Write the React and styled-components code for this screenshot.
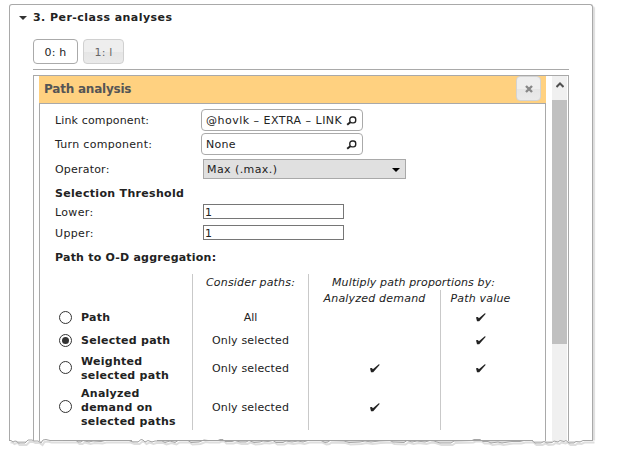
import React from 'react';
import styled, { createGlobalStyle } from 'styled-components';

const Global = createGlobalStyle`
  *, *::before, *::after { box-sizing: border-box; }
  body { margin: 0; background: #fff; }
`;

const Page = styled.div`
  width: 633px;
  height: 461px;
  padding: 4px 0 0 9px;
  overflow: hidden;
  color: #222;
  font: 11px/14px Verdana, 'DejaVu Sans', sans-serif;
  white-space: nowrap;
`;

const Panel = styled.section`
  position: relative;
  width: 584px;
  height: 437px;
  padding: 0 23px;
  border: 1px solid #a9a9a9;
  border-bottom: 0;
  border-radius: 3px 3px 0 0;
  box-shadow: 2px 2px 1px #ddd;
  background: #fff;
`;

const Heading = styled.h2`
  display: flex;
  align-items: center;
  height: 24px;
  margin: 0 0 0 -14px;
  padding-top: 1px;
  font-size: 11px;
  font-weight: bold;
`;

const Fit = styled.span`
  display: inline-block;
  letter-spacing: ${p => p.$ls || 0}px;
`;

const Caret = styled.span`
  width: 0;
  margin-right: 6px;
  border: 4px solid transparent;
  border-top: 4px solid #333;
  border-bottom: 0;
`;

const Tabs = styled.nav`
  display: flex;
  gap: 5px;
  height: 41px;
  padding-top: 10px;
  border-bottom: 1px solid #a9a9a9;
`;

const Tab = styled.button`
  width: ${p => p.$w}px;
  height: 25px;
  padding: 2px 0 0;
  border: 1px solid ${p => (p.$active ? '#aaa' : '#d0d0d0')};
  border-radius: 4px;
  color: ${p => (p.$active ? '#222' : '#666')};
  background: ${p => (p.$active ? '#fff' : 'linear-gradient(#eee 50%, #e5e5e5 50%, #eaeaea)')};
  font: inherit;
  letter-spacing: 0.2px;
`;

const Scroller = styled.div`
  display: flex;
  width: 536px;
  height: 366px;
  margin-top: 5px;
  padding: 0 1px 0 5px;
  border: 1px solid #a9a9a9;
  border-bottom: 0;
`;

const Card = styled.div`
  width: 507px;
  flex: none;
`;

const CardHeader = styled.header`
  display: flex;
  justify-content: space-between;
  height: 28px;
  padding: 0 5px;
  border-bottom: 1px solid #a9a9a9;
  background: #ffd180;
  color: #555;
  font-size: 12px;
  font-weight: bold;
  line-height: 27px;
`;

const Close = styled.button`
  display: flex;
  align-items: center;
  justify-content: center;
  width: 25px;
  height: 25px;
  padding: 0;
  border: 1px solid #d3d3d3;
  border-radius: 4px;
  background: linear-gradient(#eee 50%, #e5e5e5 50%, #eaeaea);
`;

const CardBody = styled.div`
  height: 337px;
  padding: 4px 0 0 15px;
  border: solid #a9a9a9;
  border-width: 0 1px;
`;

const Field = styled.div`
  display: flex;
  align-items: center;
  height: ${p => p.$h}px;
`;

const Label = styled.label`
  width: ${p => (p.$wide ? 148 : 146)}px;
  padding-top: 2px;
`;

const Picker = styled.div`
  display: flex;
  align-items: center;
  justify-content: space-between;
  width: 162px;
  height: 22px;
  padding: 1px 5px 0 4px;
  border: 1px solid #aaa;
  border-radius: 4px;
`;

const Select = styled.div`
  display: flex;
  align-items: center;
  justify-content: space-between;
  width: 203px;
  height: 20px;
  padding: 1px 5px 0 3px;
  border: 1px solid #a9a9a9;
  background: #e0e0e0;
`;

const Input = styled.input`
  width: 141px;
  height: 15px;
  padding: 1px 1px 0;
  border: 1px solid #767676;
  color: #222;
  font: inherit;
`;

const Subheading = styled.h3`
  height: ${p => p.$h}px;
  margin: 0;
  font-size: 11px;
  line-height: ${p => p.$line}px;
`;

const Table = styled.div`
  display: grid;
  grid-template-columns: 137px 116px 212px;
  margin-top: 5px;
`;

const Column = styled.div`
  display: grid;
  grid-template-rows: ${p => (p.$split ? 16 : 32)}px 23px 23px 32px 46px;
  justify-items: ${p => (p.$names ? 'start' : 'center')};
  align-items: center;
  height: ${p => (p.$split ? 140 : 156)}px;
  border-left: ${p => (p.$names ? 0 : 1)}px solid #c9c9c9;
`;

const Multiply = styled.div`
  display: grid;
  grid-template-columns: 131px 80px;
  grid-template-rows: 16px 140px;
  border-left: 1px solid #c9c9c9;
`;

const ColumnTitle = styled.div`
  align-self: start;
  height: 14px;
  padding-top: 2px;
  font-style: italic;
`;

const WideTitle = styled(ColumnTitle)`
  grid-column: 1 / 3;
  padding-left: 23px;
`;

const Values = styled(Column)`
  border-left-width: ${p => (p.$line ? 1 : 0)}px;
`;

const Option = styled.div`
  display: flex;
  align-items: center;
  gap: 9px;
  padding-left: 4px;
  font-weight: bold;
  white-space: pre;
`;

const OptionName = styled.span`
  padding-top: ${p => (p.$tall ? 2 : 0)}px;
  letter-spacing: 0.27px;
`;

const Only = styled(Fit)`
  padding-top: ${p => (p.$drop ? 2 : 0)}px;
`;

const Radio = styled.span`
  display: flex;
  align-items: center;
  justify-content: center;
  width: 13px;
  height: 13px;
  margin-bottom: ${p => (p.$lift ? 1 : 0)}px;
  border: 1px solid #333;
  border-radius: 50%;
  background: #fff;
  &::after {
    content: '';
    width: 7px;
    height: 7px;
    border-radius: 50%;
    background: ${p => (p.$on ? '#333' : 'transparent')};
  }
`;

const Scrollbar = styled.div`
  width: 15px;
  height: 366px;
  margin-left: 6px;
  background: #f0f0f0;
`;

const ScrollUp = styled.div`
  display: flex;
  align-items: center;
  justify-content: center;
  height: 24px;
  padding-bottom: 6px;
`;

const Thumb = styled.div`
  height: 244px;
  background: #c0c0c0;
`;

const TornSvg = styled.svg`
  position: absolute;
  left: -1px;
  top: 430px;
`;

const Search = () => (
  <svg width="11" height="10" viewBox="0 0 11 10" fill="none" stroke="#222">
    <rect x="3.8" y="1" width="5.9" height="5.9" rx="2.3" strokeWidth="1.4" />
    <path d="M4.3 6.2 1.2 8.8" strokeWidth="1.9" />
  </svg>
);

const Check = () => (
  <svg width="10" height="9" viewBox="0 0 10 9">
    <path d="M0 4.2 1.9 4 2.9 5.3 8.8.2 9.8.8 3.2 8.3 1 8.3Z" fill="#222" />
  </svg>
);

const edge = 'M0 5.5 L2 5.5 4 7 6 6 8 6.5 9 8 16 8 19 5 23 5 25 6 29 6 32 8 34 5 37 4.5 41 5.5 67 5.5 69 7 72 7 74 5.5 80 7 84 6 92 6.5 96 5.5 120 5.5 124 7 129 7 132 4.5 134 5 136 7 139 5.5 143 7 146 6 153 6 156 7.5 161 6 166 7.5 169 5.5 179 5.5 182 7.5 190 7 195 5 199 5.5 209 5.5 211 4.5 214 4.5 216 6.5 223 6.5 226 5.5 231 7 237 7 240 5.5 245 7.5 251 7 254 6 259 6.5 264 5.5 267 7.5 274 7.5 277 6 283 7 289 6 294 7 299 5.5 312 5.5 316 7.5 319 7 321 5.5 335 6 340 7.5 351 7 356 6 362 7 370 6 381 5.5 384 7 395 7.5 398 5.5 403 7 408 6 416 7 421 5.5 425 6 431 8 442 8 445 6 463 5.5 465 4.5 471 4.5 474 6.5 479 6.5 482 8 489 7 493 8 499 7 503 6.5 511 6.5 515 5.5 523 5.5 526 8 532 8 535 6.5 538 8 543 7.5 545 6 549 7 551 5.5 555 6.5 557 5.5 560 8 565 8 567 6.5 571 7 574 5.5 584 5.5';

const TornEdge = () => (
  <TornSvg width="590" height="20" viewBox="0 0 590 20" fill="none">
    <path d={edge + ' L590 5.5 590 20 0 20Z'} fill="#fff" />
    <path d={edge} transform="translate(1.5 2)" stroke="#dedede" strokeWidth="2" />
    <path d={edge} stroke="#a5a5a5" />
    <path d="M54 5.5H123M148 5.5H524" stroke="#a2a2a2" />
  </TornSvg>
);

const options = ['Path', 'Selected path', 'Weighted\nselected path', 'Analyzed\ndemand on\nselected paths'];

export default function App() {
  return (
    <Page>
      <Global />
      <Panel>
        <Heading><Caret /><Fit $ls={0.45}>3. Per-class analyses</Fit></Heading>
        <Tabs>
          <Tab $active $w={45}>0: h</Tab>
          <Tab $w={41}>1: l</Tab>
        </Tabs>
        <Scroller>
          <Card>
            <CardHeader>
              <Fit $ls={-0.22}>Path analysis</Fit>
              <Close aria-label="Close">
                <svg width="8" height="8" viewBox="0 0 8 8"><path d="M1 1 7 7M7 1 1 7" stroke="#888" strokeWidth="2.4" /></svg>
              </Close>
            </CardHeader>
            <CardBody>
              <Field $h={24}><Label><Fit $ls={0.15}>Link component:</Fit></Label><Picker><Fit $ls={0.48}>@hovlk – EXTRA – LINK</Fit><Search /></Picker></Field>
              <Field $h={24}><Label><Fit $ls={0.3}>Turn component:</Fit></Label><Picker><Fit $ls={0.3}>None</Fit><Search /></Picker></Field>
              <Field $h={26}>
                <Label $wide><Fit $ls={0.2}>Operator:</Fit></Label>
                <Select><Fit $ls={0.42}>Max (.max.)</Fit><svg width="8" height="4"><path d="M0 0H8L4 4Z" fill="#000" /></svg></Select>
              </Field>
              <Subheading $h={19} $line={24}><Fit $ls={0.32}>Selection Threshold</Fit></Subheading>
              <Field $h={21}><Label $wide><Fit $ls={0.35}>Lower:</Fit></Label><Input defaultValue="1" /></Field>
              <Field $h={21}><Label $wide><Fit $ls={0.35}>Upper:</Fit></Label><Input defaultValue="1" /></Field>
              <Subheading $h={26} $line={30}><Fit $ls={0.22}>Path to O-D aggregation:</Fit></Subheading>
              <Table>
                <Column $names>
                  <span />
                  {options.map((o, i) => (
                    <Option key={o}><Radio $on={i === 1} $lift={i > 1} /><OptionName $tall={i > 1}>{o}</OptionName></Option>
                  ))}
                </Column>
                <Column>
                  <ColumnTitle><Fit $ls={0.18}>Consider paths:</Fit></ColumnTitle>
                  <Fit>All</Fit>
                  <Only $ls={0.15}>Only selected</Only>
                  <Only $drop $ls={0.15}>Only selected</Only>
                  <Only $drop $ls={0.15}>Only selected</Only>
                </Column>
                <Multiply>
                  <WideTitle><Fit $ls={0.13}>Multiply path proportions by:</Fit></WideTitle>
                  <Values $split><ColumnTitle><Fit $ls={0.2}>Analyzed demand</Fit></ColumnTitle><span /><span /><Check /><Check /></Values>
                  <Values $split $line><ColumnTitle><Fit $ls={0.2}>Path value</Fit></ColumnTitle><Check /><Check /><Check /></Values>
                </Multiply>
              </Table>
            </CardBody>
          </Card>
          <Scrollbar>
            <ScrollUp><svg width="8" height="6" fill="none"><path d="M.5 5 4 1.5 7.5 5" stroke="#505050" strokeWidth="2" /></svg></ScrollUp>
            <Thumb />
          </Scrollbar>
        </Scroller>
        <TornEdge />
      </Panel>
    </Page>
  );
}
